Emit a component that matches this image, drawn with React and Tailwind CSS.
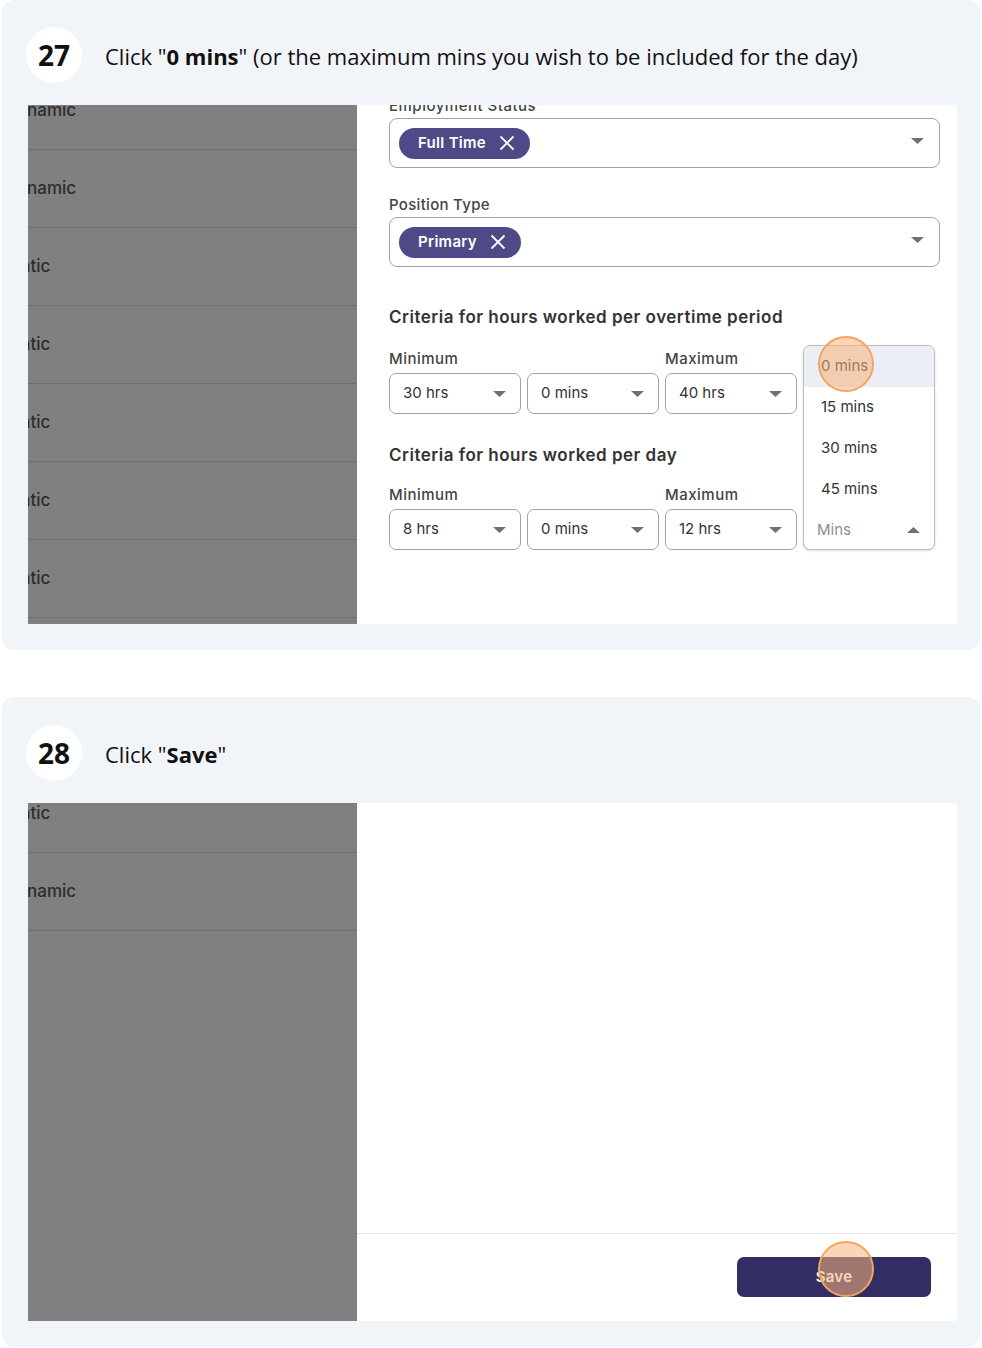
const appFont = { fontFamily: "Inter, 'Noto Sans', sans-serif" };

function Caret({ up = false, className = "" }) {
  return (
    <svg width="13" height="6" viewBox="0 0 13 6" className={className}>
      {up ? (
        <path d="M0 6 L13 6 L6.5 0 Z" fill="#707070" />
      ) : (
        <path d="M0 0 L13 0 L6.5 6 Z" fill="#707070" />
      )}
    </svg>
  );
}

function ClickMark({ className = "" }) {
  return (
    <div
      className={
        "absolute w-[56px] h-[56px] rounded-full border-2 border-[#f2a65e] bg-[#f7b27a]/55 " +
        className
      }
    />
  );
}

function Chip({ label }) {
  return (
    <div className="flex items-center h-[31px] pl-[19px] pr-[15px] gap-[13px] rounded-full bg-[#4e4a87] text-white text-[15px] font-semibold tracking-[0.3px]">
      <span>{label}</span>
      <svg width="16" height="16" viewBox="0 0 16 16">
        <path d="M1.5 1.5 L14.5 14.5 M14.5 1.5 L1.5 14.5" stroke="white" strokeWidth="1.8" />
      </svg>
    </div>
  );
}

function MultiSelect({ label }) {
  return (
    <div className="h-[50px] rounded-[8px] border border-[#a3a3a3] flex items-center justify-between pl-[9px] pr-[15px]">
      <Chip label={label} />
      <Caret className="-mt-[5px]" />
    </div>
  );
}

function Select({ value }) {
  return (
    <div className="h-[41px] rounded-[7px] border border-[#a3a3a3] flex items-center justify-between pl-[13px] pr-[14px] text-[15px] text-[#333]">
      <span>{value}</span>
      <Caret />
    </div>
  );
}

function MinsMenu() {
  return (
    <div className="absolute left-0 right-0 bottom-0 h-[205px] rounded-[7px] border border-[#bdbdbd] bg-white shadow-sm flex flex-col text-[15px] text-[#333]">
      <div className="relative h-[41px] shrink-0 flex items-center pl-[17px] bg-[#eceef5] rounded-t-[7px]">
        0 mins
        <ClickMark className="left-[14px] top-[-10px]" />
      </div>
      <div className="h-[41px] shrink-0 flex items-center pl-[17px]">15 mins</div>
      <div className="h-[41px] shrink-0 flex items-center pl-[17px]">30 mins</div>
      <div className="h-[41px] shrink-0 flex items-center pl-[17px]">45 mins</div>
      <div className="h-[40px] shrink-0 flex items-center justify-between pl-[13px] pr-[14px] text-[#8a8f99]">
        <span>Mins</span>
        <Caret up />
      </div>
    </div>
  );
}

function GrayRow({ word, cut }) {
  return (
    <div className="h-[78px] shrink-0 border-b border-[#6f6f6f] flex items-center">
      <span className={"text-[17px] font-medium text-[#2c2c2c] " + cut}>{word}</span>
    </div>
  );
}

function StepHeader({ n, children }) {
  return (
    <div className="flex items-center h-[56px] pl-[24px] gap-[23px]">
      <div className="w-[56px] h-[56px] rounded-full bg-white flex items-center justify-center text-[28px] font-bold text-[#111]">
        {n}
      </div>
      <div className="text-[22px] text-[#111] mt-[2px]">{children}</div>
    </div>
  );
}

function CriteriaBlock({ title, first, second, third, menu, labelGap }) {
  return (
    <>
      <div className="text-[17px] font-semibold text-[#333] leading-[24px] tracking-[0.5px]">{title}</div>
      <div className={"grid grid-cols-4 gap-x-[6px] w-[546px] text-[15px] text-[#444] leading-[20px] font-medium tracking-[0.5px] " + labelGap}>
        <div className="col-span-2">Minimum</div>
        <div className="col-span-2">Maximum</div>
      </div>
      <div className="grid grid-cols-4 gap-x-[6px] w-[546px] mt-[4px]">
        <Select value={first} />
        <Select value={second} />
        <Select value={third} />
        <div className="relative">
          <Select value="" />
          {menu && <MinsMenu />}
        </div>
      </div>
    </>
  );
}

export default function App() {
  return (
    <div className="bg-white w-[982px] h-[1348px]" style={{ fontFamily: "'Open Sans', sans-serif" }}>
      {/* step 27 */}
      <div className="mx-[2px] w-[978px] rounded-[12px] bg-[#f1f4f9] pt-[27px] pb-[26px]">
        <StepHeader n="27">
          Click "<b>0 mins</b>" (or the maximum mins you wish to be included for the day)
        </StepHeader>
        <div className="ml-[26px] mt-[22px] w-[929px] h-[519px] flex overflow-hidden" style={appFont}>
          <div className="w-[329px] bg-[#808080] flex flex-col overflow-hidden">
            <div className="-mt-[33px] flex flex-col">
              <GrayRow word="Dynamic" cut="-ml-[23px]" />
              <GrayRow word="Dynamic" cut="-ml-[23px]" />
              <GrayRow word="Static" cut="-ml-[24px]" />
              <GrayRow word="Static" cut="-ml-[24px]" />
              <GrayRow word="Static" cut="-ml-[24px]" />
              <GrayRow word="Static" cut="-ml-[24px]" />
              <GrayRow word="Static" cut="-ml-[24px]" />
              <GrayRow word="" cut="" />
            </div>
          </div>
          <div className="w-[600px] bg-white pl-[32px] overflow-hidden flex flex-col">
            <div className="-mt-[9px] h-[20px] leading-[20px] text-[15px] text-[#444] font-medium tracking-[0.5px]">
              Employment Status
            </div>
            <div className="mt-[2px] w-[551px]">
              <MultiSelect label="Full Time" />
            </div>
            <div className="mt-[27px] h-[20px] leading-[20px] text-[15px] text-[#444] font-medium tracking-[0.3px]">
              Position Type
            </div>
            <div className="mt-[2px] w-[551px]">
              <MultiSelect label="Primary" />
            </div>
            <div className="mt-[38px]">
              <CriteriaBlock title="Criteria for hours worked per overtime period" first="30 hrs" second="0 mins" third="40 hrs" labelGap="mt-[20px]" />
            </div>
            <div className="mt-[29px]">
              <CriteriaBlock title="Criteria for hours worked per day" first="8 hrs" second="0 mins" third="12 hrs" menu labelGap="mt-[18px]" />
            </div>
          </div>
        </div>
      </div>

      {/* step 28 */}
      <div className="mx-[2px] mt-[47px] w-[978px] rounded-[12px] bg-[#f1f4f9] pt-[28px] pb-[26px]">
        <StepHeader n="28">
          Click "<b>Save</b>"
        </StepHeader>
        <div className="ml-[26px] mt-[22px] w-[929px] h-[518px] flex overflow-hidden" style={appFont}>
          <div className="w-[329px] bg-[#808080] flex flex-col overflow-hidden">
            <div className="-mt-[28px] flex flex-col">
              <GrayRow word="Static" cut="-ml-[24px]" />
              <GrayRow word="Dynamic" cut="-ml-[23px]" />
              <div className="h-[321px] shrink-0 border-b border-[#7a7a7a]" />
            </div>
          </div>
          <div className="w-[600px] bg-white flex flex-col">
            <div className="h-[431px] border-b border-[#e3e3e3]" />
            <div className="flex justify-end pr-[26px] pt-[23px]">
              <div className="relative w-[194px] h-[40px] rounded-[7px] bg-[#332d65] flex items-center justify-center text-white text-[15px] font-semibold tracking-[0.3px]">
                Save
                <ClickMark className="left-[81px] top-[-16px]" />
              </div>
            </div>
          </div>
        </div>
      </div>
    </div>
  );
}
